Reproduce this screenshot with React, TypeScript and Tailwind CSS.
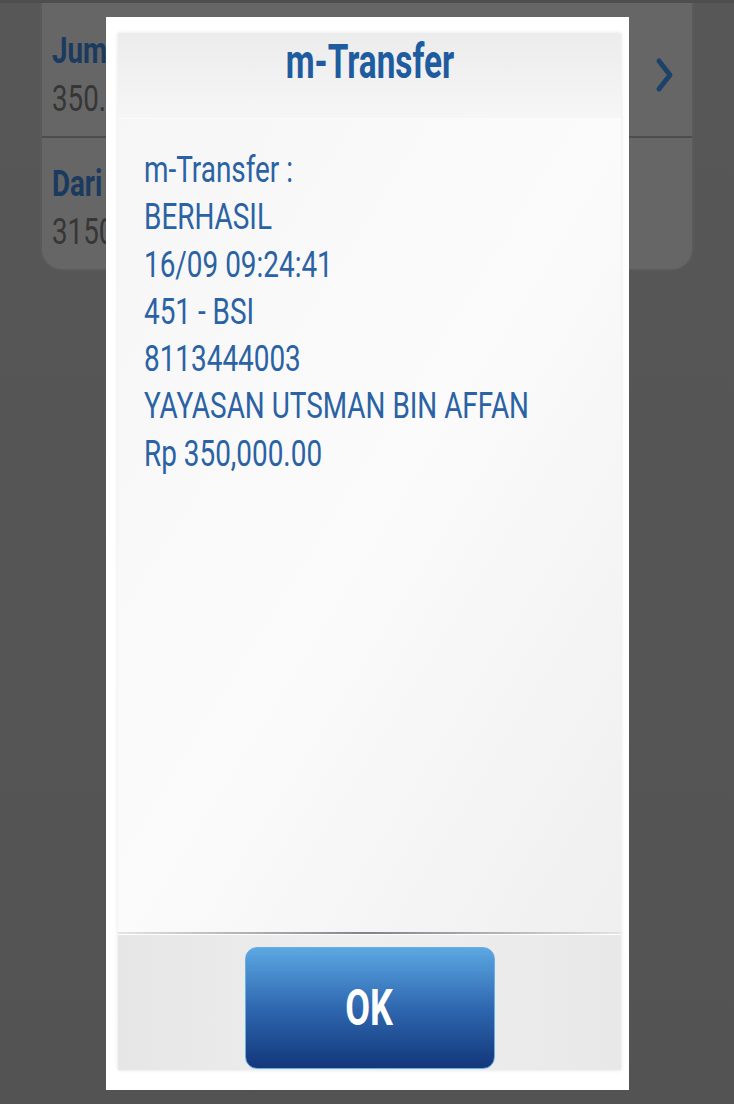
import React from "react";

const font = { fontFamily: "Roboto, 'Noto Sans', Arial, sans-serif" };

function Squeeze({ children, className = "" }: { children: React.ReactNode; className?: string }) {
  return <span className={`inline-block whitespace-nowrap ${className}`}>{children}</span>;
}

export default function App() {
  const lines = [
    "m-Transfer :",
    "BERHASIL",
    "16/09 09:24:41",
    "451 - BSI",
    "8113444003",
    "YAYASAN UTSMAN BIN AFFAN",
    "Rp 350,000.00",
  ];
  return (
    <div
      className="relative w-[734px] h-[1104px] overflow-hidden bg-gradient-to-b from-[#575757] to-[#535353]"
      style={font}
    >
      {/* background card */}
      <div className="h-[3px] bg-[#4e4e4e]" />
      <div className="ml-[40px] w-[654px] h-[268px] bg-[#666666] rounded-b-[22px] border-x-2 border-b-2 border-[#5a5a5a] flex flex-col">
        <div className="h-[135px] border-b-2 border-[#4d4d4d] flex items-start justify-between pl-[10px] pr-[16px]">
          <div className="flex flex-col items-start pt-[26px]">
            <Squeeze className="origin-left scale-x-[0.77] text-[36px] leading-[44px] font-bold text-[#1b3a60]">Jumlah</Squeeze>
            <Squeeze className="origin-left scale-x-[0.77] text-[36px] leading-[44px] text-[#363636] mt-[4px]">350.000</Squeeze>
          </div>
          <svg width="22" height="38" viewBox="0 0 22 38" className="mt-[53px]">
            <path d="M5 5 L16 19 L5 33" fill="none" stroke="#1c4268" strokeWidth="5" strokeLinecap="round" strokeLinejoin="round" />
          </svg>
        </div>
        <div className="flex flex-col items-start pl-[10px] pt-[24px]">
          <Squeeze className="origin-left scale-x-[0.77] text-[36px] leading-[44px] font-bold text-[#1b3a60]">Dari Rekening</Squeeze>
          <Squeeze className="origin-left scale-x-[0.77] text-[36px] leading-[44px] text-[#363636] mt-[4px]">3150000000</Squeeze>
        </div>
      </div>

      {/* modal */}
      <div className="absolute left-[106px] top-[17px] w-[523px] h-[1073px] bg-white pl-[12px] pt-[16px] pr-[8px] pb-[20px] flex">
        <div className="flex-1 min-w-0 overflow-hidden flex flex-col bg-gradient-to-r from-[#ebebeb] via-[#f9f9f9] to-[#eeeeee] shadow-[0_0_4px_rgba(0,0,0,0.12)]">
          {/* header */}
          <div className="h-[86px] flex items-start justify-center pt-[3px] bg-gradient-to-b from-[#ececec] to-[#f6f6f6] border-b border-[#fbfbfb]">
            <Squeeze className="origin-center scale-x-[0.68] text-[49px] leading-[52px] font-bold text-[#1f5c9f]">
              m-Transfer
            </Squeeze>
          </div>
          {/* body */}
          <div className="flex-1 flex flex-col items-start pl-[26px] pt-[28px] bg-gradient-to-br from-[#f6f6f6] via-[#fbfbfb] to-[#efefef]">
            {lines.map((l) => (
              <Squeeze key={l} className="origin-left scale-x-[0.775] text-[36px] leading-[47.3px] text-[#2a62a4]">
                {l}
              </Squeeze>
            ))}
          </div>
          {/* separator */}
          <div className="h-[2px] bg-gradient-to-r from-[#e4e4e4] via-[#7f838a] to-[#e4e4e4]" />
          <div className="h-[1px] bg-white" />
          {/* footer */}
          <div className="h-[135px] flex justify-center pt-[12px] bg-gradient-to-r from-[#e6e6e6] via-[#efefef] to-[#e8e8e8]">
            <div className="w-[250px] h-[122px] rounded-[12px] bg-gradient-to-b from-[#5ca7e2] via-[#2f68b0] to-[#13377a] border border-[#6aaee6] flex items-center justify-center">
              <Squeeze className="origin-center scale-x-[0.72] text-[50px] leading-[50px] font-bold text-white">OK</Squeeze>
            </div>
          </div>
        </div>
      </div>
    </div>
  );
}
